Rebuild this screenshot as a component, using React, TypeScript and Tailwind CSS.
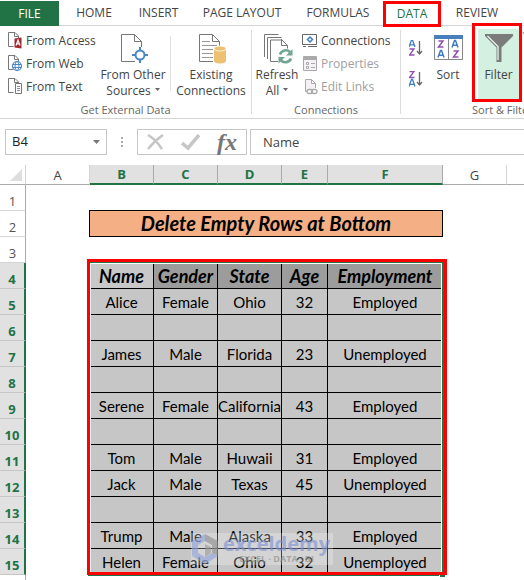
import React, { ReactNode } from 'react';

const tabs = [
  { name: 'HOME', width: 'w-[70px]' },
  { name: 'INSERT', width: 'w-[59px]' },
  { name: 'PAGE LAYOUT', width: 'w-[108px]' },
  { name: 'FORMULAS', width: 'w-[84px]' },
  { name: 'DATA', width: 'w-[58px]' },
  { name: 'REVIEW', width: 'w-[66px]' },
];

const columns = ['A', 'B', 'C', 'D', 'E', 'F', 'G'];

const rows = [
  ['Alice', 'Female', 'Ohio', '32', 'Employed'],
  ['', '', '', '', ''],
  ['James', 'Male', 'Florida', '23', 'Unemployed'],
  ['', '', '', '', ''],
  ['Serene', 'Female', 'California', '43', 'Employed'],
  ['', '', '', '', ''],
  ['Tom', 'Male', 'Huwaii', '31', 'Employed'],
  ['Jack', 'Male', 'Texas', '45', 'Unemployed'],
  ['', '', '', '', ''],
  ['Trump', 'Male', 'Alaska', '33', 'Employed'],
  ['Helen', 'Female', 'Ohio', '32', 'Unemployed'],
];

const headings = ['Name', 'Gender', 'State', 'Age', 'Employment'];

function Caret() {
  return (
    <svg width="5" height="3" viewBox="0 0 5 3" className="inline-block ml-1 mb-1">
      <path d="M0 0h5L2.5 3z" fill="#666" />
    </svg>
  );
}

function PageIcon({ children }: { children?: ReactNode }) {
  return (
    <svg width="16" height="17" viewBox="0 0 16 17" fill="none" className="shrink-0">
      <path d="M6.5 14.5h-5v-14H8L11.5 4v3" stroke="#777" />
      <path d="M7.5 .5v4h4" stroke="#777" />
      {children}
    </svg>
  );
}

function AccessIcon() {
  return (
    <PageIcon>
      <path d="M7.500 6.500l7-1v11l-7-1z" fill="#a4262c" />
      <path d="M9 13.500L11 8l2 5.500M9.600 11.800h2.800" stroke="#fff" strokeWidth="1.200" />
    </PageIcon>
  );
}

function WebIcon() {
  return (
    <PageIcon>
      <circle cx="10" cy="11" r="4.500" fill="#fff" stroke="#4a86c5" strokeWidth="1.200" />
      <ellipse cx="10" cy="11" rx="2" ry="4.500" stroke="#4a86c5" />
      <path d="M6 9.500h8M6 12.500h8" stroke="#4a86c5" />
    </PageIcon>
  );
}

function TextIcon() {
  return (
    <PageIcon>
      <path d="M8.500 5.500h6v10h-6z" fill="#fff" stroke="#777" />
      <path d="M10 8.500h3M10 10.500h3M10 12.500h3" stroke="#888" />
    </PageIcon>
  );
}

function OtherSourcesIcon() {
  return (
    <svg width="28" height="30" viewBox="0 0 28 30" fill="none">
      <path d="M14 27.500H.5V.5h13l7 7V13M13.500 .5v7h7" stroke="#777" />
      <path d="M19 13v16M11 21h16" stroke="#4a86c5" strokeWidth="2" />
      <circle cx="19" cy="21" r="4.500" fill="#fff" stroke="#4a86c5" strokeWidth="2" />
    </svg>
  );
}

function ExistingIcon() {
  return (
    <svg width="28" height="31" viewBox="0 0 28 31" fill="none">
      <path d="M14 27.500H.5V.5h13l7 7V12M13.500 .5v7h7" stroke="#777" />
      <path d="M3 7.500h8M3 11.500h15M3 15.500h11M3 19.500h11M3 23.500h11" stroke="#999" />
      <path d="M15 15v12c0 1.500 2.700 2.500 6 2.500s6-1 6-2.500V15z" fill="#edc172" />
      <ellipse cx="21" cy="14.500" rx="6" ry="2.500" fill="#edc172" stroke="#fff" strokeWidth=".8" />
    </svg>
  );
}

function RefreshIcon() {
  return (
    <svg width="30" height="31" viewBox="0 0 30 31" fill="none">
      <path d="M.5 23V.5h14M3.500 25V3.500h14M14 27.500H6.500v-21.500H18l5.500 5.500v3M17.500 5v6.500h6" stroke="#777" />
      <path d="M16 20.500c1.500-4.500 7-5.500 10-2.500M27 24.500c-1.500 4-7 5-10 2" stroke="#6fa592" strokeWidth="2.600" />
      <path d="M28.500 15v6.500H22zM14.500 29.500V23H21z" fill="#6fa592" />
    </svg>
  );
}

function ConnectionsIcon() {
  return (
    <svg width="16" height="14" viewBox="0 0 16 14" fill="none" className="shrink-0">
      <path d="M.5 .5h14v10H.5z" stroke="#666" />
      <path d="M1 12.500h3M6 12.500h9" stroke="#666" />
      <path d="M8 3l2.500 2.500L8 8 5.500 5.500z" stroke="#3f7cc4" strokeWidth="1.500" />
    </svg>
  );
}

function PropertiesIcon() {
  return (
    <svg width="16" height="16" viewBox="0 0 16 16" fill="none" className="shrink-0">
      <path d="M1.500 .5h13v14h-13z" fill="#f5f1f6" stroke="#aaa" />
      <path d="M1 1h14v3H1z" fill="#aaa" />
      <path d="M4.500 6.500h2v2h-2zM4.500 10.500h2v2h-2z" stroke="#aaa" />
      <path d="M9 7.500h4M9 11.500h4" stroke="#aaa" />
    </svg>
  );
}

function EditLinksIcon() {
  return (
    <svg width="16" height="16" viewBox="0 0 16 16" fill="none" className="shrink-0">
      <path d="M5 12.500H3.500V.5h6l4 4V9M9.500 .5v4h4" fill="#f5f1f6" stroke="#aaa" />
      <rect x="5" y="10.500" width="5.500" height="4" rx="2" stroke="#aaa" strokeWidth="1.300" />
      <rect x="9.500" y="10.500" width="5.500" height="4" rx="2" stroke="#aaa" strokeWidth="1.300" />
    </svg>
  );
}

const letterA = 'M0 7L2.500 0h1L6 7M1 4.800h4';
const letterZ = 'M.5 .5h4.500L.5 6.500h5';

function SortOrderIcon({ descending }: { descending?: boolean }) {
  return (
    <svg width="14" height="16" viewBox="0 0 14 16" fill="none">
      <g strokeWidth="1.300">
        <path d={letterA} stroke="#3f7cc4" transform={descending ? 'translate(0 8.500)' : 'translate(0 0)'} />
        <path d={letterZ} stroke="#9150b0" transform={descending ? 'translate(0 0)' : 'translate(0 8.500)'} />
      </g>
      <path d="M10.500 1v12M8 11l2.500 3 2.500-3" stroke="#666" strokeWidth="1.300" />
    </svg>
  );
}

function SortIcon() {
  return (
    <svg width="29" height="25" viewBox="0 0 29 25" fill="none">
      <path d="M.5 .5h28v24H.5zM14.500 3v22" stroke="#888" />
      <path d="M0 0h29v4H0z" fill="#4a7fbd" />
      <g strokeWidth="1.500">
        <path d={letterZ} stroke="#9150b0" transform="translate(4 5.500)" />
        <path d={letterA} stroke="#3f7cc4" transform="translate(4 15.500)" />
        <path d={letterA} stroke="#3f7cc4" transform="translate(18 5.500)" />
        <path d={letterZ} stroke="#9150b0" transform="translate(19 15.500)" />
      </g>
    </svg>
  );
}

function FilterIcon() {
  return (
    <svg width="28" height="28" viewBox="0 0 28 28">
      <path d="M0 0h28v2L16.500 13.500V28h-5V13.500L0 2z" fill="#7b7b7b" />
      <path d="M2.500 2l10.500 10.500V26" fill="none" stroke="#e8f5ee" strokeWidth="1.300" />
    </svg>
  );
}

function ClearIcon() {
  return (
    <svg width="12" height="12" viewBox="0 0 12 12">
      <path d="M0 0h12L7 6v6H5V6z" fill="#aaa" />
    </svg>
  );
}

function SmallButton({ icon, label, disabled }: { icon: ReactNode; label: string; disabled?: boolean }) {
  return (
    <button
      disabled={disabled}
      className="flex items-center h-[23px] gap-[3px] whitespace-nowrap disabled:text-[#a0a0a0]"
    >
      {icon}
      {label}
    </button>
  );
}

function GroupLabel({ children }: { children: ReactNode }) {
  return <h2 className="absolute bottom-0 inset-x-0 text-center text-[11px] leading-4 text-[#666]">{children}</h2>;
}

function Ribbon() {
  return (
    <div className="flex h-[93px] border-b border-[#d4d4d4] text-[#444] text-xs">
      <section className="relative w-[251px] shrink-0 flex pl-[7px]">
        <div className="flex flex-col pt-[3px] w-[89px]">
          <SmallButton icon={<AccessIcon />} label="From Access" />
          <SmallButton icon={<WebIcon />} label="From Web" />
          <SmallButton icon={<TextIcon />} label="From Text" />
        </div>
        <button className="flex flex-col items-center w-[74px] h-[76px] pt-2 leading-4 whitespace-nowrap">
          <span className="h-[33px] pl-1"><OtherSourcesIcon /></span>
          From Other
          <span>Sources<Caret /></span>
        </button>
        <div className="w-px h-[55px] mt-[10px] bg-[#e1e1e1]" />
        <button className="flex flex-col items-center w-[80px] h-[76px] pt-2 leading-4 whitespace-nowrap">
          <span className="h-[33px] pl-1"><ExistingIcon /></span>
          Existing
          <span>Connections</span>
        </button>
        <GroupLabel>Get External Data</GroupLabel>
      </section>
      <div className="w-px h-[84px] mt-1 bg-[#dcdcdc]" />
      <section className="relative w-[148px] shrink-0 flex gap-[2px] pl-[2px]">
        <button className="flex flex-col items-center w-[46px] h-[76px] pt-2 leading-4 whitespace-nowrap">
          <span className="h-[33px] pl-1"><RefreshIcon /></span>
          Refresh
          <span>All<Caret /></span>
        </button>
        <div className="flex flex-col pt-[3px]">
          <SmallButton icon={<ConnectionsIcon />} label="Connections" />
          <SmallButton icon={<PropertiesIcon />} label="Properties" disabled />
          <SmallButton icon={<EditLinksIcon />} label="Edit Links" disabled />
        </div>
        <GroupLabel>Connections</GroupLabel>
      </section>
      <div className="w-px h-[84px] mt-1 bg-[#dcdcdc]" />
      <section className="relative flex grow pl-2">
        <div className="flex flex-col pt-[14px] gap-[15px] w-[20px]">
          <button aria-label="Sort A to Z"><SortOrderIcon /></button>
          <button aria-label="Sort Z to A"><SortOrderIcon descending /></button>
        </div>
        <button className="flex flex-col items-center w-[38px] h-[76px] pt-[9px] leading-4">
          <span className="h-[32px]"><SortIcon /></span>
          Sort
        </button>
        <button className="ml-[5px] -mt-[3px] w-[50px] h-[79px] shrink-0 border-3 border-[#ff0000] bg-white pl-[3px] pt-[3px]">
          <span className="flex flex-col items-center h-full bg-[#d3f0e0] pt-[5px] leading-4">
            <span className="h-[33px]"><FilterIcon /></span>
            Filter
          </span>
        </button>
        <button aria-label="Clear" className="self-start pt-[6px] w-[2px] overflow-hidden"><ClearIcon /></button>
        <h2 className="absolute bottom-0 left-[71px] whitespace-nowrap text-[11px] leading-4 text-[#666]">Sort &amp; Filter</h2>
      </section>
    </div>
  );
}

function FormulaBar() {
  return (
    <div className="flex pl-[5px] pt-[10px] h-[46px] text-[13px] text-[#222]">
      <div className="flex items-center justify-between w-[102px] h-[26px] border border-[#c6c6c6] px-[6px] shrink-0">
        <input aria-label="Name box" defaultValue="B4" className="w-12 outline-none" />
        <svg width="7" height="4" viewBox="0 0 7 4"><path d="M0 0h7L3.500 4z" fill="#777" /></svg>
      </div>
      <div className="flex flex-col items-center justify-center gap-[2px] w-[30px] h-[26px] shrink-0">
        <span className="size-[2px] bg-[#aaa]" />
        <span className="size-[2px] bg-[#aaa]" />
        <span className="size-[2px] bg-[#aaa]" />
      </div>
      <div className="flex items-center justify-between w-[110px] h-[26px] border border-[#c6c6c6] px-[9px] shrink-0">
        <button aria-label="Cancel">
          <svg width="17" height="16" viewBox="0 0 17 16" fill="none" stroke="#c6c6c6" strokeWidth="2.500">
            <path d="M1 1c5 3 10 8 14 14M16 1C10 5 5 10 1 15" />
          </svg>
        </button>
        <button aria-label="Enter">
          <svg width="20" height="17" viewBox="0 0 20 17" fill="none" stroke="#c6c6c6" strokeWidth="3.500">
            <path d="M1 9l6 5L18 1" />
          </svg>
        </button>
        <button aria-label="Insert function" className="font-['Liberation_Serif',serif] italic font-bold text-[24px] leading-5 text-[#777]">fx</button>
      </div>
      <input
        aria-label="Formula"
        defaultValue="Name"
        className="grow min-w-0 h-[26px] ml-[3px] border border-r-0 border-[#c6c6c6] pl-3 outline-none text-[#444]"
      />
    </div>
  );
}

function RowHead({ n }: { n: number }) {
  const active = n >= 4;
  return (
    <th
      scope="row"
      className={
        active
          ? 'h-[26px] p-0 align-bottom leading-[18px] bg-[#e1e1e1] border-b border-b-[#c6c6c6] border-r-2 border-r-[#217346] text-[#217346] text-[13px] font-bold'
          : 'h-[26px] p-0 align-bottom leading-[18px] border-b border-b-[#d4d4d4] border-r border-r-[#ababab] text-[#555] text-[13px] font-normal'
      }
    >
      {n}
    </th>
  );
}

function Watermark() {
  return (
    <div className="absolute left-[191px] top-[368px] w-[142px] h-[32px] flex items-center gap-1 bg-white/25 pointer-events-none">
      <svg width="28" height="30" viewBox="0 0 28 30" className="opacity-60">
        <path d="M14 0L1 7v15l6-3V11l7-4z" fill="#8ea2dc" />
        <path d="M14 0l13 7v15l-6-3V11l-7-4z" fill="#8c8c8c" />
        <path d="M1 22l13 8 13-8-6-3-7 4-7-4z" fill="#8ea2dc" />
        <path d="M14 10l6 3v6l-6 4z" fill="#999" />
      </svg>
      <div className="flex flex-col items-center font-['Open_Sans',sans-serif] font-bold whitespace-nowrap opacity-60">
        <span className="text-[20px] leading-5 text-[#7c8fd6]">exceldemy</span>
        <span className="text-[9px] leading-[10px] text-[#888]">EXCEL · DATA · BI</span>
      </div>
    </div>
  );
}

function Sheet() {
  return (
    <div className="relative">
      <table className="w-full table-fixed border-separate border-spacing-0 text-center">
        <colgroup>
          <col className="w-[26px]" />
          <col className="w-[64px]" />
          <col className="w-[64px]" />
          <col className="w-[64px]" />
          <col className="w-[64px]" />
          <col className="w-[46px]" />
          <col className="w-[115px]" />
          <col className="w-[64px]" />
          <col />
        </colgroup>
        <thead>
          <tr className="text-[13px] leading-[18px]">
            <th className="h-[20px] border-r border-b border-r-[#d4d4d4] border-b-[#ababab]">
              <svg width="12" height="12" viewBox="0 0 12 12" className="ml-auto mr-[3px]">
                <path d="M12 0v12H0z" fill="#dedede" />
              </svg>
            </th>
            {columns.map((c) => (
              <th
                key={c}
                scope="col"
                className={
                  c >= 'B' && c <= 'F'
                    ? 'bg-[#e1e1e1] border-r border-r-[#ababab] border-b-2 border-b-[#217346] text-[#217346] font-bold'
                    : 'border-r border-r-[#d4d4d4] border-b border-b-[#ababab] text-[#444] font-normal'
                }
              >
                {c}
              </th>
            ))}
            <th className="border-b border-b-[#ababab]" />
          </tr>
        </thead>
        <tbody className="text-black">
          <tr>
            <RowHead n={1} />
            <td colSpan={8} />
          </tr>
          <tr>
            <RowHead n={2} />
            <td />
            <td colSpan={5} className="p-0">
              <div className="h-[27px] -mt-px -ml-px bg-[#f4b084] border border-black font-['Lato',sans-serif] text-[20px] leading-6 font-bold italic">
                Delete Empty Rows at Bottom
              </div>
            </td>
            <td colSpan={2} />
          </tr>
          <tr>
            <RowHead n={3} />
            <td colSpan={8} />
          </tr>
          <tr>
            <RowHead n={4} />
            <td />
            {headings.map((h) => (
              <th
                key={h}
                className={
                  h === 'Name'
                    ? "bg-[#c8c8c8] border-r border-b border-black p-0 font-['Lato',sans-serif] text-[18px] leading-6 font-bold italic"
                    : "bg-[#9c9c9c] border-r border-b border-black p-0 font-['Lato',sans-serif] text-[18px] leading-6 font-bold italic"
                }
              >
                {h}
              </th>
            ))}
            <td colSpan={2} />
          </tr>
          {rows.map((row, i) => (
            <tr key={i}>
              <RowHead n={i + 5} />
              <td />
              {row.map((cell, j) => (
                <td
                  key={j}
                  className="bg-[#c6c6c6] border-r border-b border-black p-0 font-['Lato',sans-serif] text-[15px] leading-6 whitespace-nowrap"
                >
                  {cell}
                </td>
              ))}
              <td colSpan={2} />
            </tr>
          ))}
        </tbody>
      </table>
      <Watermark />
      <div className="absolute left-[87px] top-[94px] w-[360px] h-[316px] border-3 border-[#ff0000] pointer-events-none">
        <div className="h-full border-t border-r-2 border-[#217346]">
          <div className="h-full border-t border-x border-white" />
        </div>
      </div>
      <div className="absolute left-[88px] top-[410px] w-[351px] h-px bg-[#217346]" />
      <div className="absolute left-[440px] top-[410px] w-[5px] h-[2px] bg-[#217346]" />
      <div className="w-[26px] h-[5px] border-r border-[#ababab]" />
    </div>
  );
}

export default function App() {
  return (
    <main className="bg-white font-['Open_Sans','Noto_Sans',sans-serif] overflow-hidden">
      <nav className="flex h-[26px] pt-px border-b border-[#d4d4d4] text-xs text-[#444]">
        <a href="#file" className="w-[59px] h-[25px] shrink-0 flex items-center justify-center bg-[#217346] text-white">
          FILE
        </a>
        {tabs.map((tab) => (
          <a
            key={tab.name}
            href={'#' + tab.name.toLowerCase()}
            className={
              'flex items-center justify-center shrink-0 whitespace-nowrap ' +
              tab.width +
              (tab.name === 'DATA' ? ' relative h-[26px] mx-[3px] text-[#217346] border-3 border-[#ff0000]' : '')
            }
          >
            {tab.name}
          </a>
        ))}
      </nav>
      <Ribbon />
      <FormulaBar />
      <Sheet />
    </main>
  );
}
